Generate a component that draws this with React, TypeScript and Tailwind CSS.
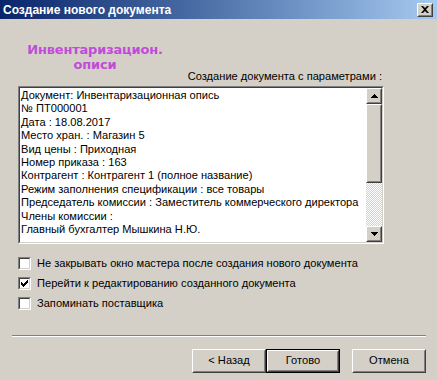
import React from "react";

const docLines = [
  "Документ: Инвентаризационная опись",
  "№ ПТ000001",
  "Дата : 18.08.2017",
  "Место хран. : Магазин 5",
  "Вид цены : Приходная",
  "Номер приказа : 163",
  "Контрагент : Контрагент 1 (полное название)",
  "Режим заполнения спецификации : все товары",
  "Председатель комиссии : Заместитель коммерческого директора",
  "Члены комиссии :",
  "Главный бухгалтер Мышкина Н.Ю.",
];

const options = [
  { label: "Не закрывать окно мастера после создания нового документа", checked: false },
  { label: "Перейти к редактированию созданного документа", checked: true },
  { label: "Запоминать поставщика", checked: false },
];

const CheckBox: React.FC<{ checked: boolean }> = ({ checked }) => (
  <div className="w-[13px] h-[13px] border border-t-[#808080] border-l-[#808080] border-b-white border-r-white">
    <div className="w-full h-full border border-t-[#404040] border-l-[#404040] border-b-[#d4d0c8] border-r-[#d4d0c8] bg-white flex items-center justify-center">
      {checked && (
        <svg width="7" height="7" viewBox="0 0 7 7">
          <path d="M0 2h1v1h1v1h1V3h1V2h1V1h1V0h1v3H6v1H5v1H4v1H3v1H2V6H1V5H0z" fill="#000" />
        </svg>
      )}
    </div>
  </div>
);

const Raised: React.FC<{ className?: string; children?: React.ReactNode }> = ({ className = "", children }) => (
  <div className={`border border-t-white border-l-white border-b-[#404040] border-r-[#404040] bg-[#d4d0c8] ${className}`}>
    <div className="w-full h-full border border-t-[#d4d0c8] border-l-[#d4d0c8] border-b-[#808080] border-r-[#808080] flex items-center justify-center">
      {children}
    </div>
  </div>
);

const Button: React.FC<{ label: string; isDefault?: boolean; className?: string }> = ({ label, isDefault, className = "" }) => (
  <div className={`h-[24px] w-[74px] ${isDefault ? "border border-black" : ""} ${className}`}>
    <Raised className="w-full h-full">
      <span className="text-[11.1px] leading-none text-black">{label}</span>
    </Raised>
  </div>
);

const App: React.FC = () => {
  return (
    <div className="w-[437px] h-[380px] bg-[#d4d0c8] flex flex-col font-['Liberation_Sans',Arial,sans-serif] text-black select-none overflow-hidden">
      {/* title bar */}
      <div className="h-[19px] flex items-center justify-between pl-[3px] pr-[4px] bg-gradient-to-r from-[#0a246a] to-[#a6caf0]">
        <span className="text-white font-bold text-[12px] leading-none">Создание нового документа</span>
        <Raised className="w-[16px] h-[14px]">
          <svg width="8" height="7" viewBox="0 0 8 7">
            <path d="M0 0h2l2 2 2-2h2L5 3.5 8 7H6L4 5 2 7H0l3-3.5z" fill="#000" />
          </svg>
        </Raised>
      </div>

      <div className="flex flex-col">
        <div className="mt-[23px] ml-[20px] w-[150px] h-[28px] text-center text-[13px] leading-[15px] font-bold text-[#c04cd8] font-['Verdana','DejaVu_Sans',sans-serif] tracking-[-0.2px]">
          <div>Инвентаризацион.</div>
          <div>описи</div>
        </div>

        <div className="ml-[18px] w-[366px]">
          <div className="h-[16px] text-right pr-[2px] text-[11.1px] leading-[13px]">
            Создание документа с параметрами :
          </div>

          {/* text box */}
          <div className="h-[158px] border border-t-[#808080] border-l-[#808080] border-b-white border-r-white">
            <div className="w-full h-full border border-t-[#404040] border-l-[#404040] border-b-[#d4d0c8] border-r-[#d4d0c8] bg-white flex">
              <div className="flex-1 pl-[1px] pt-[1px] text-[11.1px] leading-[13.4px] whitespace-nowrap overflow-hidden">
                {docLines.map((l) => (
                  <div key={l}>{l}</div>
                ))}
              </div>
              <div className="w-[16px] flex flex-col">
                <Raised className="h-[16px]">
                  <svg width="7" height="4" viewBox="0 0 7 4">
                    <path d="M3 0h1v1h1v1h1v1h1v1H0V3h1V2h1V1h1z" fill="#000" />
                  </svg>
                </Raised>
                <Raised className="h-[79px]" />
                <div className="flex-1 bg-[repeating-conic-gradient(#ffffff_0%_25%,#d4d0c8_0%_50%)] bg-size-[2px_2px]" />
                <Raised className="h-[16px]">
                  <svg width="7" height="4" viewBox="0 0 7 4">
                    <path d="M0 0h7v1H6v1H5v1H4v1H3V3H2V2H1V1H0z" fill="#000" />
                  </svg>
                </Raised>
              </div>
            </div>
          </div>
        </div>

        {/* options */}
        <div className="mt-[13px] ml-[18px] flex flex-col gap-[7px]">
          {options.map((o) => (
            <div key={o.label} className="h-[13px] flex items-center gap-[6px]">
              <CheckBox checked={o.checked} />
              <span className="text-[11.1px] leading-none">{o.label}</span>
            </div>
          ))}
        </div>

        <div className="mt-[25px] ml-[12px] w-[414px] border-t border-t-[#808080] border-b border-b-white" />

        <div className="mt-[12px] ml-[192px] flex">
          <Button label="< Назад" />
          <Button label="Готово" isDefault />
          <Button label="Отмена" className="ml-[12px]" />
        </div>
      </div>
    </div>
  );
};

export default App;
